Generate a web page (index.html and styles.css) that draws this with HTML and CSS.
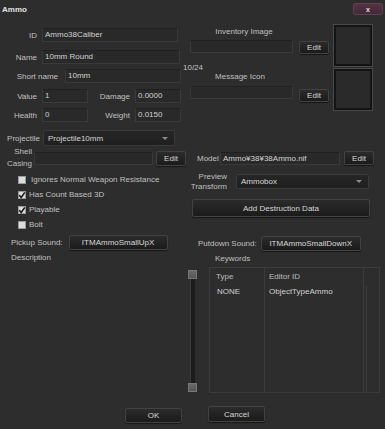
FILE: index.html
```html
<!DOCTYPE html>
<html lang="en">
<head>
  <meta charset="UTF-8">
  <meta name="viewport" content="width=device-width, initial-scale=1.0">
  <title>Ammo</title>
  <link rel="stylesheet" href="styles.css">
</head>
<body>
  <div class="window">
    <div class="titlebar">
      <span class="title">Ammo</span>
      <span class="close">x</span>
    </div>

    <div class="top">
      <div class="left">
        <div class="row r-id">
          <span class="lbl w37">ID</span>
          <span class="field w136">Ammo38Caliber</span>
        </div>
        <div class="row r-name">
          <span class="lbl w37">Name</span>
          <span class="field w138">10mm Round</span>
          <span class="counter">10/24</span>
        </div>
        <div class="row r-short">
          <span class="lbl w58">Short name</span>
          <span class="field w116">10mm</span>
        </div>
        <div class="row r-value">
          <span class="lbl w37">Value</span>
          <span class="field w46">1</span>
          <span class="lbl w42">Damage</span>
          <span class="field w46">0.0000</span>
        </div>
        <div class="row r-health">
          <span class="lbl w37">Health</span>
          <span class="field w46">0</span>
          <span class="lbl w42">Weight</span>
          <span class="field w46">0.0150</span>
        </div>
        <div class="row r-proj">
          <span class="lbl w40">Projectile</span>
          <span class="select w132">Projectile10mm<span class="arrow"></span></span>
        </div>
        <div class="row r-shell">
          <span class="lbl lbl-two w32">Shell<br>Casing</span>
          <span class="field w119"></span>
          <span class="btn w30">Edit</span>
        </div>
        <div class="checks">
          <div class="check"><span class="box"></span><span class="check-text first">Ignores Normal Weapon Resistance</span></div>
          <div class="check"><span class="box"><svg width="8" height="8" viewBox="0 0 8 8"><path d="M1.2 4.2 L3.2 6.4 L6.8 1.4" fill="none" stroke="#1b1b1b" stroke-width="1.6"/></svg></span><span class="check-text">Has Count Based 3D</span></div>
          <div class="check"><span class="box"><svg width="8" height="8" viewBox="0 0 8 8"><path d="M1.2 4.2 L3.2 6.4 L6.8 1.4" fill="none" stroke="#1b1b1b" stroke-width="1.6"/></svg></span><span class="check-text">Playable</span></div>
          <div class="check"><span class="box"></span><span class="check-text">Bolt</span></div>
        </div>
      </div>

      <div class="right">
        <div class="img-group">
          <div class="img-fields">
            <div class="cap">Inventory Image</div>
            <span class="field w103"></span>
          </div>
          <span class="btn w30 img-edit">Edit</span>
          <div class="img-box"></div>
        </div>
        <div class="img-group second">
          <div class="img-fields">
            <div class="cap">Message Icon</div>
            <span class="field w103"></span>
          </div>
          <span class="btn w30 img-edit">Edit</span>
          <div class="img-box"></div>
        </div>
        <div class="row r-model">
          <span class="lbl w21">Model</span>
          <span class="field w120">Ammo¥38¥38Ammo.nif</span>
          <span class="btn w30">Edit</span>
        </div>
        <div class="row r-preview">
          <span class="lbl lbl-preview">Preview<br>Transform</span>
          <span class="select w133">Ammobox<span class="arrow"></span></span>
        </div>
        <div class="btn destruction">Add Destruction Data</div>
      </div>
    </div>

    <div class="bottom">
      <div class="bottom-left">
        <div class="row r-sound">
          <span class="sound-lbl">Pickup Sound:</span>
          <span class="btn sound">ITMAmmoSmallUpX</span>
        </div>
        <div class="caption desc">Description</div>
        <div class="scrollbar">
          <span class="thumb"></span>
          <span class="track"></span>
          <span class="thumb"></span>
        </div>
      </div>
      <div class="bottom-right">
        <div class="row r-sound putdown">
          <span class="sound-lbl">Putdown Sound:</span>
          <span class="btn sound">ITMAmmoSmallDownX</span>
        </div>
        <div class="caption keywords">Keywords</div>
        <div class="kw-table">
          <div class="kw-col c-type">
            <div class="kw-head">Type</div>
            <div class="kw-cell">NONE</div>
          </div>
          <div class="kw-col c-id">
            <div class="kw-head">Editor ID</div>
            <div class="kw-cell">ObjectTypeAmmo</div>
          </div>
          <div class="kw-col c-end">
            <div class="kw-head"></div>
            <div class="kw-rest"></div>
          </div>
        </div>
      </div>
    </div>

    <div class="footer">
      <span class="btn ok">OK</span>
      <span class="btn cancel">Cancel</span>
    </div>
  </div>
</body>
</html>
```

FILE: styles.css
```css
body {
  margin: 0;
  background-color: #2d2d2d;
  font-family: "Liberation Sans", Arial, sans-serif;
  font-size: 8px;
  color: #c0c0c0;
}
.window {
  width: 385px;
  height: 429px;
  overflow: hidden;
}
.titlebar {
  height: 18px;
  display: flex;
  align-items: center;
  justify-content: space-between;
  padding: 0 2px;
}
.title {
  font-weight: bold;
  color: #e2e2e2;
}
.close {
  width: 30px;
  height: 12px;
  box-sizing: border-box;
  display: flex;
  align-items: center;
  justify-content: center;
  background: linear-gradient(#553342, #43293a);
  border: 1px solid #5f4250;
  border-radius: 2px;
  color: #e6dde2;
  font-size: 7px;
  font-weight: bold;
}

/* generic pieces */
.row {
  display: flex;
  align-items: center;
  height: 14px;
}
.lbl {
  flex-shrink: 0;
  text-align: right;
  margin-right: 5px;
}
.field {
  display: block;
  flex-shrink: 0;
  box-sizing: border-box;
  height: 14px;
  line-height: 12px;
  padding-left: 2px;
  background-color: #292929;
  border: 1px solid #3a3a3a;
  border-top-color: #202020;
  color: #d2d2d2;
  white-space: nowrap;
  overflow: hidden;
}
.select {
  flex-shrink: 0;
  box-sizing: border-box;
  height: 16px;
  display: flex;
  align-items: center;
  padding-left: 4px;
  background: linear-gradient(#262626, #1f1f1f);
  border: 1px solid #3a3a3a;
  border-radius: 2px;
  color: #d6d6d6;
}
.arrow {
  margin-left: auto;
  margin-right: 6px;
  border-left: 3px solid transparent;
  border-right: 3px solid transparent;
  border-top: 3px solid #8c8c8c;
}
.btn {
  flex-shrink: 0;
  box-sizing: border-box;
  height: 14px;
  display: flex;
  align-items: center;
  justify-content: center;
  background: linear-gradient(#2b2b2b, #1b1b1b);
  border: 1px solid #424242;
  border-radius: 2px;
  box-shadow: 0 1px 1px rgba(0, 0, 0, 0.5);
  color: #d8d8d8;
}

.w21 { width: 21px; }
.w30 { width: 30px; }
.w32 { width: 32px; }
.w37 { width: 37px; }
.w40 { width: 40px; }
.w42 { width: 42px; }
.w46 { width: 46px; }
.w58 { width: 58px; }
.w103 { width: 103px; }
.w116 { width: 116px; }
.w119 { width: 119px; }
.w120 { width: 120px; }
.w132 { width: 132px; }
.w133 { width: 133px; }
.w136 { width: 136px; }
.w138 { width: 138px; }

/* top part */
.top {
  display: flex;
}
.left {
  width: 188px;
  flex-shrink: 0;
  padding-top: 10px;
}
.right {
  flex: 1;
  padding-top: 7px;
}
.r-name { margin-top: 8px; }
.r-short { margin-top: 5px; }
.r-short .lbl { margin-right: 7px; }
.r-value { margin-top: 6px; }
.r-health { margin-top: 5px; }
.counter {
  flex-shrink: 0;
  align-self: flex-end;
  margin: 0 0 -9px 3px;
  line-height: 10px;
}
.r-proj {
  margin-top: 8px;
  height: 16px;
}
.r-proj .lbl { margin-right: 3px; }
.r-shell {
  margin-top: 4px;
  height: 16px;
}
.r-shell .lbl { margin-right: 2px; }
.r-shell .field { height: 13px; }
.r-shell .btn {
  margin-left: 3px;
  height: 15px;
}
.lbl-two {
  line-height: 12px;
}
.checks {
  margin-top: 6px;
  padding-left: 18px;
}
.check {
  height: 15px;
  display: flex;
  align-items: center;
}
.box {
  width: 8px;
  height: 8px;
  box-sizing: border-box;
  background-color: #dcdcdc;
  border: 1px solid #9a9a9a;
  display: flex;
}
.box svg {
  margin: -1px;
}
.check-text {
  margin-left: 3px;
}
.check-text.first {
  margin-left: 5px;
}

.img-group {
  display: flex;
  align-items: flex-start;
  height: 41px;
}
.img-group.second {
  margin-top: 3px;
}
.img-fields {
  width: 108px;
  padding-left: 2px;
  flex-shrink: 0;
}
.cap {
  text-align: center;
  line-height: 10px;
  margin-top: 2px;
  margin-bottom: 3px;
}
.second .cap {
  margin-top: 3px;
  margin-bottom: 4px;
  padding-right: 8px;
}
.img-fields .field {
  height: 13px;
}
.img-edit {
  margin: 16px 0 0 1px;
  height: 13px;
}
.second .img-edit {
  margin-top: 20px;
}
.img-box {
  width: 38px;
  height: 41px;
  margin-left: 5px;
  box-sizing: border-box;
  background-color: #2a2a2a;
  border: 2px solid #141414;
  outline: 1px solid #484848;
}
.r-model {
  margin-top: 41px;
  padding-left: 9px;
}
.r-model .lbl { margin-right: 2px; }
.r-model .field { height: 13px; }
.r-model .btn { margin-left: 4px; }
.r-preview {
  margin-top: 9px;
  height: 15px;
}
.lbl-preview {
  width: 39px;
  line-height: 10px;
  margin-right: 9px;
}
.r-preview .select {
  height: 15px;
}
.destruction {
  margin: 10px 0 0 4px;
  width: 178px;
  height: 18px;
}

/* bottom part */
.bottom {
  display: flex;
  margin-top: 3px;
}
.bottom-left {
  width: 198px;
  flex-shrink: 0;
}
.bottom-right {
  flex: 1;
}
.r-sound {
  height: 15px;
  padding-left: 11px;
}
.sound-lbl {
  margin-right: 6px;
}
.sound {
  width: 99px;
  height: 15px;
}
.putdown {
  margin-top: 1px;
  padding-left: 0;
}
.putdown .sound-lbl {
  margin-right: 4px;
}
.putdown .sound {
  width: 100px;
}
.caption {
  line-height: 11px;
  margin-top: 2px;
}
.desc {
  padding-left: 11px;
}
.keywords {
  padding-left: 17px;
}
.scrollbar {
  margin: 7px 0 0 188px;
  width: 9px;
  height: 122px;
  display: flex;
  flex-direction: column;
  align-items: center;
}
.thumb {
  width: 9px;
  height: 9px;
  box-sizing: border-box;
  background: linear-gradient(#6a6a6a, #555);
  border: 1px solid #777;
}
.track {
  flex: 1;
  width: 4px;
  background-color: #1c1c1c;
  border-left: 1px solid #3a3a3a;
}
.kw-table {
  margin: 3px 0 0 11px;
  width: 171px;
  height: 126px;
  box-sizing: border-box;
  border: 1px solid #3c3c3c;
  display: flex;
}
.kw-col {
  display: flex;
  flex-direction: column;
}
.c-type {
  width: 54px;
}
.c-id {
  width: 98px;
  border-left: 1px solid #3c3c3c;
}
.c-end {
  flex: 1;
  border-left: 1px solid #3c3c3c;
}
.kw-head {
  height: 18px;
  line-height: 18px;
  color: #bdbdbd;
}
.kw-cell {
  line-height: 12px;
  color: #d0d0d0;
}
.c-type .kw-head { padding-left: 6px; }
.c-type .kw-cell { padding-left: 7px; }
.c-id .kw-head,
.c-id .kw-cell { padding-left: 4px; }
.kw-rest {
  flex: 1;
  margin-left: 2px;
  border-left: 1px solid #3c3c3c;
}

.footer {
  display: flex;
  align-items: flex-start;
  gap: 26px;
  margin-top: 13px;
  padding-left: 125px;
}
.ok {
  width: 57px;
  height: 15px;
  margin-top: 2px;
}
.cancel {
  width: 57px;
  height: 16px;
}
```
